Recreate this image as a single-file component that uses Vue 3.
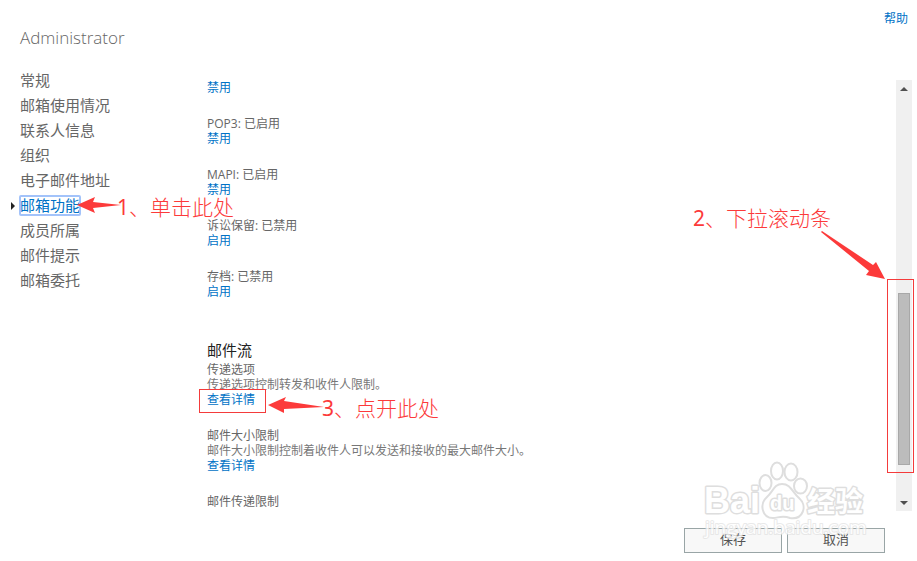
<script setup>
import { ref } from 'vue'

const sections = [
  '常规',
  '邮箱使用情况',
  '联系人信息',
  '组织',
  '电子邮件地址',
  '邮箱功能',
  '成员所属',
  '邮件提示',
  '邮箱委托'
]
const current = ref('邮箱功能')

const features = [
  { status: '', action: '禁用' },
  { status: 'POP3: 已启用', action: '禁用' },
  { status: 'MAPI: 已启用', action: '禁用' },
  { status: '诉讼保留: 已禁用', action: '启用' },
  { status: '存档: 已禁用', action: '启用' }
]

const mailFlow = [
  { name: '传递选项', text: '传递选项控制转发和收件人限制。', action: '查看详情' },
  { name: '邮件大小限制', text: '邮件大小限制控制着收件人可以发送和接收的最大邮件大小。', action: '查看详情' },
  { name: '邮件传递限制', text: '', action: '' }
]
</script>

<template>
  <div class="page">
    <header class="top">
      <h1>Administrator</h1>
      <a class="help" href="#help">帮助</a>
    </header>

    <div class="body">
      <nav class="nav">
        <a
          v-for="s in sections"
          :key="s"
          href="#"
          :class="{ active: s === current }"
          @click.prevent="current = s"
        ><span>{{ s }}</span></a>
      </nav>

      <main class="content">
        <div v-for="(f, i) in features" :key="i" class="item">
          <p v-if="f.status">{{ f.status }}</p>
          <a href="#">{{ f.action }}</a>
        </div>
        <h2>邮件流</h2>
        <div v-for="m in mailFlow" :key="m.name" class="item flow">
          <p>{{ m.name }}</p>
          <p v-if="m.text" class="desc">{{ m.text }}</p>
          <a v-if="m.action" href="#">{{ m.action }}</a>
        </div>
      </main>

      <div class="scrollbar">
        <button type="button" aria-label="向上滚动">
          <svg width="8" height="4" viewBox="0 0 8 4"><path d="M0 4L4 0L8 4Z" fill="#505050" /></svg>
        </button>
        <div class="track"><div class="thumb"></div></div>
        <button type="button" aria-label="向下滚动">
          <svg width="8" height="4" viewBox="0 0 8 4"><path d="M0 0L4 4L8 0Z" fill="#505050" /></svg>
        </button>
      </div>
    </div>

    <footer class="actions">
      <button type="button">保存</button>
      <button type="button">取消</button>
    </footer>

    <svg class="arrows" width="917" height="561" viewBox="0 0 917 561" fill="#fc3a3a">
      <path d="M77 205L95 197L93 202L121 205L93 208L95 213Z" />
      <path d="M268 405L286 397L284 401L324 407L284 409L284 413Z" />
      <path d="M822 231L873 265L876 262L885 279L866 275L869 271L821 232Z" />
    </svg>
    <span class="note note-1"><b>1</b>、单击此处</span>
    <span class="note note-2"><b>2</b>、下拉滚动条</span>
    <span class="note note-3"><b>3</b>、点开此处</span>
    <div class="frame frame-details"></div>
    <div class="frame frame-scroll"></div>

    <div class="watermark" aria-hidden="true">
      <svg width="180" height="90" viewBox="0 0 180 90">
        <g fill="#fff" stroke="#dedede" stroke-width="2">
          <ellipse cx="65.500" cy="33" rx="6" ry="8" />
          <ellipse cx="77" cy="21" rx="6" ry="8.500" />
          <ellipse cx="91" cy="22" rx="6.500" ry="8.500" />
          <ellipse cx="100.500" cy="36" rx="6.500" ry="7.500" />
          <path d="M82 34C74 34 73 42 67 47C59 54 62 68 73 68C78 68 82 65 90 68C103 70 108 56 99 48C92 42 91 34 82 34Z" />
        </g>
        <g class="mark">
          <text x="4" y="63" class="bai">Bai</text>
          <text x="70" y="60" class="du">du</text>
          <text x="107" y="62" class="jy">经验</text>
          <text x="5" y="84" class="url">jingyan.baidu.com</text>
        </g>
      </svg>
    </div>
  </div>
</template>

<style>
body {
  margin: 0;
  background: #fff;
}
</style>

<style scoped>
.page {
  position: relative;
  box-sizing: border-box;
  min-height: 100vh;
  display: flex;
  flex-direction: column;
  overflow: hidden;
  color: #666;
  font: 12px/15px "Open Sans", "Noto Sans CJK SC", sans-serif;
}
h1, h2, p {
  margin: 0;
  font-weight: 400;
}
a {
  color: #0072c6;
  text-decoration: none;
}
.top {
  display: flex;
  justify-content: space-between;
  align-items: flex-start;
  padding: 11px 9px 18px 20px;
}
h1 {
  padding-top: 14px;
  font-size: 17px;
  line-height: 25px;
  font-weight: 300;
}
.body {
  flex: 1;
  display: flex;
  align-items: stretch;
  padding-right: 5px;
}
.nav {
  width: 207px;
  flex: none;
  box-sizing: border-box;
  padding-left: 11px;
  font-size: 15px;
  line-height: 25px;
}
.nav a {
  display: flex;
  align-items: center;
  height: 25px;
  padding-left: 9px;
  color: #666;
}
.nav a.active {
  padding-left: 0;
  color: #0072c6;
}
.nav a.active::before {
  content: "";
  width: 0;
  margin-right: 5px;
  border: 4px solid transparent;
  border-left-color: #222;
  border-right-width: 0;
}
.nav a.active span {
  line-height: 19px;
  border-radius: 1px;
  outline: 2px solid #a3c3fa;
  outline-offset: -1px;
}
.content {
  flex: 1;
  min-width: 0;
  padding-top: 12px;
}
.item {
  margin-bottom: 21px;
}
.item a {
  display: block;
  width: max-content;
}
.desc {
  color: #777;
}
h2 {
  margin: 41px 0 2px;
  font-size: 15px;
  line-height: 20px;
  color: #222;
}
.flow:last-child {
  margin-bottom: 0;
}
.scrollbar {
  width: 16px;
  flex: none;
  display: flex;
  flex-direction: column;
  margin-top: 12px;
  background: #f0f0f0;
}
.scrollbar button {
  display: grid;
  place-items: center;
  height: 17px;
  padding: 0;
  border: 0;
  background: none;
}
.track {
  flex: 1;
  display: flex;
  flex-direction: column;
  justify-content: flex-end;
  padding: 0 2px 29px;
}
.thumb {
  height: 172px;
  box-sizing: border-box;
  border: 1px solid #a8a8a8;
  background: #bcbcbc;
}
.actions {
  display: flex;
  justify-content: flex-end;
  gap: 5px;
  padding: 17px 32px 8px;
}
.actions button {
  width: 98px;
  height: 25px;
  padding: 0 0 2px;
  border: 1px solid #99a5a6;
  background: #f8f8f8;
  color: #555;
  font: 13px/15px "Open Sans", "Noto Sans CJK SC", sans-serif;
}
.arrows {
  position: absolute;
  left: 0;
  top: 0;
  pointer-events: none;
}
.note {
  position: absolute;
  color: #fc3a3a;
  font: 300 21px/26px "Noto Sans", "Noto Sans CJK SC", sans-serif;
  white-space: nowrap;
}
.note b {
  font-weight: 400;
}
.note-1 {
  left: 117px;
  top: 194px;
}
.note-2 {
  left: 693px;
  top: 205px;
}
.note-3 {
  left: 322px;
  top: 395px;
}
.frame {
  position: absolute;
  box-sizing: border-box;
  border: 1px solid #f43b3b;
  pointer-events: none;
}
.frame-details {
  left: 199px;
  top: 389px;
  width: 67px;
  height: 24px;
}
.frame-scroll {
  left: 887px;
  top: 279px;
  width: 27px;
  height: 194px;
}
.watermark {
  position: absolute;
  left: 700px;
  top: 450px;
  pointer-events: none;
}
.watermark svg {
  display: block;
}
.mark {
  fill: #fff;
  stroke: #dedede;
  stroke-width: 3px;
  stroke-linejoin: round;
  paint-order: stroke;
  font-family: "Liberation Sans", sans-serif;
  font-weight: 700;
}
.bai {
  font-size: 36px;
}
.du {
  font-size: 20px;
}
.jy {
  font-family: "Noto Sans CJK SC", sans-serif;
  font-size: 28px;
}
.url {
  font-family: "Open Sans", sans-serif;
  font-size: 19px;
  font-weight: 400;
  stroke: #e4e4e4;
  stroke-width: 2px;
  opacity: 0.8;
}
</style>
